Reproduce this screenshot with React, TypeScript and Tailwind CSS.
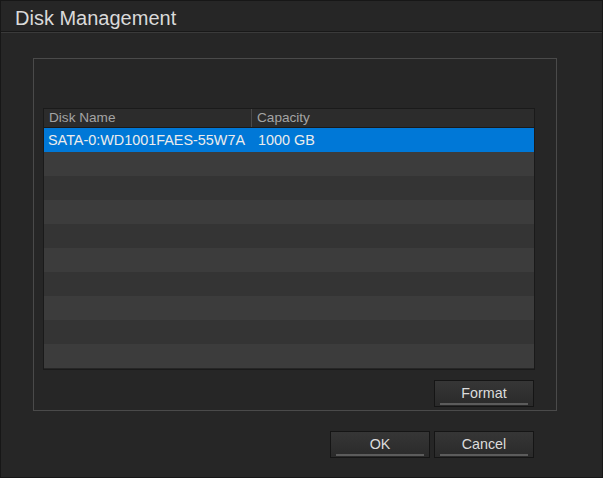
import React from "react";

const rows = Array.from({ length: 10 }, (_, i) => i);

function Btn({ label }: { label: string }) {
  return (
    <div className="w-[100px] h-[27px] flex flex-col border border-[#151515] bg-gradient-to-b from-[#363636] to-[#2a2a2a]">
      <div className="flex-1 min-h-0 flex items-center justify-center text-[14.3px] leading-none text-[#dcdcdc] pt-[3px]">{label}</div>
      <div className="h-[2px] shrink-0 mx-[5px] mb-[1px] bg-[#5c5c5c]" />
    </div>
  );
}

export default function App() {
  return (
    <div
      className="w-[603px] h-[478px] bg-[#262626] border border-[#171717] flex flex-col"
      style={{ fontFamily: '"Liberation Sans", Arial, sans-serif' }}
    >
      <div className="h-[31px] shrink-0 flex items-center pl-[14px] pt-[3px] text-[20px] text-[#dadada] border-b border-[#181818]">
        Disk Management
      </div>
      <div className="h-[1px] bg-[#3a3a3a]" />
      <div className="pl-[32px] pt-[25px]">
        <div className="w-[524px] h-[353px] border border-[#4a4a4a] pl-[9px] pr-[21px] pt-[49px] flex flex-col">
          <div className="w-[492px] h-[262px] border border-[#1a1a1a] flex flex-col bg-[#262626]">
            <div className="h-[19px] flex bg-[#2c2c2c] border-b border-[#1a1a1a] text-[13.6px] text-[#a4a4a4]">
              <div className="w-[208px] border-r border-[#4a4a4a] pl-[5px] flex items-center">Disk Name</div>
              <div className="flex-1 pl-[5px] flex items-center">Capacity</div>
            </div>
            {rows.map((i) => (
              <div
                key={i}
                className={
                  "h-[24px] flex items-center pt-[1px] text-[14.4px] text-[#ececec] " +
                  (i === 0 ? "bg-[#0078d7]" : i % 2 === 1 ? "bg-[#3c3c3c]" : "bg-[#343434]")
                }
              >
                {i === 0 && (
                  <>
                    <div className="w-[209px] pl-[4px] whitespace-nowrap">SATA-0:WD1001FAES-55W7A</div>
                    <div className="pl-[5px]">1000 GB</div>
                  </>
                )}
              </div>
            ))}
          </div>
          <div className="flex justify-end pr-[1px] mt-[10px]">
            <Btn label="Format" />
          </div>
        </div>
      </div>
      <div className="flex justify-end gap-[4px] pr-[68px] mt-[20px]">
        <Btn label="OK" />
        <Btn label="Cancel" />
      </div>
    </div>
  );
}
